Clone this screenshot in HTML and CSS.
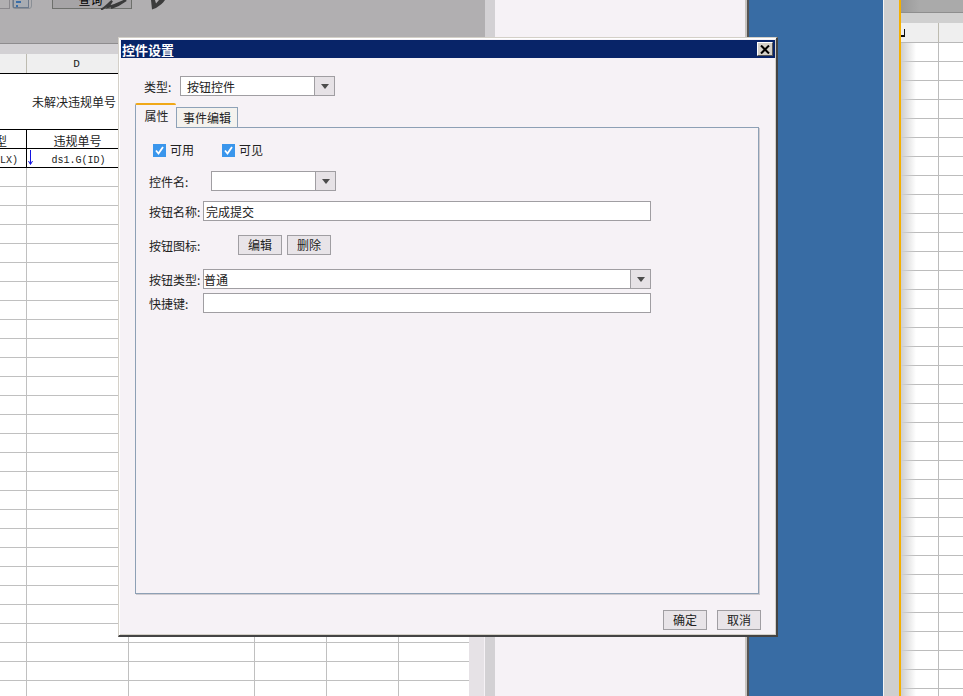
FILE: index.html
```html
<!DOCTYPE html>
<html lang="zh">
<head>
<meta charset="utf-8">
<title>控件设置</title>
<link rel="stylesheet" href="styles.css">
</head>
<body>
<div class="desktop">
  <section class="left-app">
    <div class="toolbar">
      <span class="tool-btn tool-a"></span>
      <span class="tool-btn tool-b">
        <svg class="tool-glyph" width="19" height="9" viewBox="0 0 19 9"><rect x="1.500" y="-1" width="15" height="8.500" fill="#a8acb2" stroke="#6c7a8c"/><rect x="4" y="1" width="5" height="2" fill="#3a6ea8"/><rect x="4" y="5" width="2" height="2" fill="#3a6ea8"/></svg>
      </span>
      <span class="tool-btn tool-query">查询
        <svg class="swirl" width="27" height="10" viewBox="0 0 27 10"><path d="M1 9.500C5 8 8 4 12 1L8 7C12 6 18 4 26 0C22 3 17 6 11 8" fill="none" stroke="#3a3a3a" stroke-width="2.200"/></svg>
      </span>
      <svg class="pen" width="16" height="10" viewBox="0 0 16 10"><path d="M1 0L2 9.500L6 8C10 5.500 13 3 15 0L9 0L6 3.500L5 0Z" fill="#3c3c3c"/></svg>
    </div>
    <div class="subbar"></div>
    <div class="sheet-area">
      <div class="sheet">
        <div class="row head-row"><span class="cell"></span><span class="cell">D</span><span class="cell"></span><span class="cell"></span><span class="cell"></span><span class="cell"></span></div>
        <div class="title-row">未解决违规单号</div>
        <div class="row data-row"><span class="cell clip-left">类型</span><span class="cell">违规单号</span><span class="cell"></span><span class="cell"></span><span class="cell"></span><span class="cell"></span></div>
        <div class="row data-row mono-row"><span class="cell clip-right">LX)</span><span class="cell with-arrow"><svg class="down-arrow" width="5" height="15" viewBox="0 0 5 15"><path d="M2.500 0V14M0.500 11L2.500 14.500L4.500 11" fill="none" stroke="#1414e0"/></svg>ds1.G(ID)</span><span class="cell"></span><span class="cell"></span><span class="cell"></span><span class="cell"></span></div>
        <div class="blank-grid"></div>
      </div>
      <div class="vscroll"></div>
    </div>
  </section>
  <div class="strip"></div>
  <section class="page"></section>
  <section class="blue"></section>
  <div class="side-rail"></div>
  <section class="right-app">
    <div class="right-top"></div>
    <div class="right-sub"></div>
    <div class="right-head"><span class="corner-mark"></span></div>
    <div class="right-grid"></div>
  </section>

  <div class="dialog">
    <header class="titlebar">
      <span class="title-text">控件设置</span>
      <button class="close-btn" aria-label="关闭"><svg width="10" height="9" viewBox="0 0 10 9"><path d="M1 0.500L9 8.500M9 0.500L1 8.500" stroke="#000" stroke-width="2"/></svg></button>
    </header>
    <div class="dialog-body">
      <div class="type-row">
        <span class="type-label">类型:</span>
        <div class="combo combo-type"><span class="combo-value">按钮控件</span><span class="combo-arrow"><i class="tri"></i></span></div>
      </div>
      <div class="tabs">
        <span class="tab tab-active">属性</span>
        <span class="tab">事件编辑</span>
      </div>
      <div class="panel">
        <div class="checks">
          <label class="check"><span class="box"><svg width="13" height="13" viewBox="0 0 13 13"><path d="M3 6.500L5.500 9.500L10 3" fill="none" stroke="#fff" stroke-width="1.800"/></svg></span>可用</label>
          <label class="check"><span class="box"><svg width="13" height="13" viewBox="0 0 13 13"><path d="M3 6.500L5.500 9.500L10 3" fill="none" stroke="#fff" stroke-width="1.800"/></svg></span>可见</label>
        </div>
        <div class="field field-name">
          <span class="label label-name">控件名:</span>
          <div class="combo combo-name"><span class="combo-value"></span><span class="combo-arrow"><i class="tri"></i></span></div>
        </div>
        <div class="field field-btn-name">
          <span class="label">按钮名称:</span>
          <div class="input"><span class="input-text">完成提交</span></div>
        </div>
        <div class="field field-icon">
          <span class="label label-icon">按钮图标:</span>
          <button class="btn">编辑</button>
          <button class="btn">删除</button>
        </div>
        <div class="field field-kind">
          <span class="label">按钮类型:</span>
          <div class="combo combo-kind"><span class="combo-value kind-value">普通</span><span class="combo-arrow"><i class="tri"></i></span></div>
        </div>
        <div class="field field-key">
          <span class="label">快捷键:</span>
          <div class="input"></div>
        </div>
      </div>
      <div class="actions">
        <button class="btn">确定</button>
        <button class="btn">取消</button>
      </div>
    </div>
  </div>
</div>
</body>
</html>
```

FILE: styles.css
```css
* { box-sizing: border-box; }
html, body { margin: 0; padding: 0; background: #f6f2f6; }
body { font-family: "Noto Sans CJK SC", "Liberation Sans", sans-serif; font-size: 12px; color: #222; }

.desktop { position: relative; display: flex; width: 963px; height: 696px; overflow: hidden; }

/* left application */
.left-app { width: 485px; display: flex; flex-direction: column; flex: none; }
.toolbar { height: 44px; flex: none; background: #b1afb1; border-bottom: 1px solid #8e8c8e; display: flex; align-items: flex-start; overflow: hidden; }
.tool-btn { display: block; height: 20px; margin-top: -11px; border: 1px solid #77767a; flex: none; }
.tool-a { width: 11px; margin-left: -1px; background: #b1afb1; border-color: #8a888c; }
.tool-b { width: 20px; margin-left: 2px; position: relative; background: #b1afb1; border-color: #8a8f96; border-radius: 0 0 3px 3px; }
.tool-glyph { position: absolute; left: -1px; top: 10px; }
.tool-query { position: relative; width: 80px; margin-left: 20px; background: #a6a4a6; border-color: #6e706c; color: #000; text-align: center; line-height: 20px; font-size: 12px; padding-right: 3px; }
.swirl { position: absolute; left: 47px; top: 10px; }
.pen { margin-left: 18px; flex: none; }
.subbar { height: 10px; flex: none; background: #d3d1d4; }
.sheet-area { flex: 1; display: flex; min-height: 0; }
.sheet { width: 469px; flex: none; background: #fff; overflow: hidden; display: flex; flex-direction: column; }
.vscroll { flex: 1; background: #e6e2e6; border-right: 1px solid #f6f2f6; }

.row { display: grid; grid-template-columns: 27px 102px 126px 72px 72px 70px; flex: none; }
.cell { border-right: 1px solid #c0c0c0; text-align: center; white-space: nowrap; overflow: hidden; }
.cell:last-child { border-right: 0; }
.head-row { height: 20px; background: #efefef; border-bottom: 1px solid #000; line-height: 20px; font-family: "Liberation Mono", monospace; font-size: 11px; color: #222; text-indent: -2px; }
.head-row .cell { border-right-color: #bdbbb0; }
.title-row { height: 56px; flex: none; padding: 18px 0 0 32px; border-bottom: 1px solid #000; line-height: 20px; color: #222; }
.data-row { height: 19px; border-bottom: 1px solid #000; line-height: 22px; }
.data-row .cell { border-right-color: #000; }
.clip-left { text-indent: -17px; text-align: left; }
.clip-right { text-align: left; }
.mono-row { font-family: "Liberation Mono", monospace; font-size: 10px; color: #222; line-height: 23px; }
.with-arrow { position: relative; padding-left: 2px; }
.down-arrow { position: absolute; left: 1px; top: 1px; }
.blank-grid {
  flex: 1;
  background-color: #fff;
  background-image:
    linear-gradient(#c0c0c0, #c0c0c0), linear-gradient(#c0c0c0, #c0c0c0), linear-gradient(#c0c0c0, #c0c0c0), linear-gradient(#c0c0c0, #c0c0c0), linear-gradient(#c0c0c0, #c0c0c0),
    repeating-linear-gradient(to bottom, transparent 0 18px, #c0c0c0 18px 19px);
  background-size: 1px 100%, 1px 100%, 1px 100%, 1px 100%, 1px 100%, 100% 100%;
  background-position: 26px 0, 128px 0, 254px 0, 326px 0, 398px 0, 0 0;
  background-repeat: no-repeat;
}

.strip { width: 10px; flex: none; background: #d3d1d4; }
.page { width: 254px; flex: none; background: #f6f2f6; border-right: 2px solid #555; box-shadow: inset -2px 0 0 #c9c5c1; }
.blue { width: 134px; flex: none; background: #386ca4; }
.side-rail { width: 17px; flex: none; background: #cfcfcf; border-left: 1px solid #f4f4f4; border-right: 1px solid #f5b000; }

/* right application */
.right-app { flex: 1; display: flex; flex-direction: column; border-left: 1px solid #f5b000; min-width: 0; }
.right-top { height: 13px; flex: none; background: linear-gradient(to right, #9a9a9a, #aaa 30%); border-bottom: 1px solid #8e8e8e; }
.right-sub { height: 10px; flex: none; background: #d0d0d0; }
.right-head { height: 20px; flex: none; background: linear-gradient(#efefef, #efefef) 0 0/37px 19px no-repeat, linear-gradient(#efefef, #efefef) 38px 0/30px 19px no-repeat, #bdbbb0; border-bottom: 1px solid #b8b8b8; position: relative; }
.corner-mark { position: absolute; left: 0; top: 6px; width: 4px; height: 8px; border-bottom: 2px solid #111; border-right: 1px solid #111; }
.right-grid {
  flex: 1;
  background-color: #fff;
  background-image:
    linear-gradient(to right, #cfcfcf, rgba(255, 255, 255, 0) 15px),
    linear-gradient(#bcbcbc, #bcbcbc),
    repeating-linear-gradient(to bottom, transparent 0 18px, #bcbcbc 18px 19px);
  background-size: 100% 100%, 1px 100%, 100% 100%;
  background-position: 0 0, 37px 0, 0 0;
  background-repeat: no-repeat;
}

/* dialog window */
.dialog { position: absolute; left: 118px; top: 37px; width: 660px; height: 600px; display: flex; flex-direction: column; background: #f6f2f6; border-style: solid; border-color: #d4d0c8; border-width: 1px 2px 2px 1px; border-right-color: #444; border-bottom-color: #444; padding: 2px 1px 2px 2px; box-shadow: inset 1px 1px 0 #fff, inset -1px -1px 0 #d4d0c8; }
.titlebar { height: 18px; flex: none; background: #082468; display: flex; align-items: center; justify-content: space-between; padding: 0 2px 0 1px; }
.title-text { color: #fff; font-weight: 700; font-size: 13px; line-height: 17px; }
.close-btn { width: 16px; height: 14px; padding: 0; display: flex; align-items: center; justify-content: center; background: #d4d0c8; border: 1px solid; border-color: #fff #555 #555 #fff; }
.dialog-body { flex: 1; display: flex; flex-direction: column; padding: 18px 15px 0 14px; min-height: 0; }

.type-row { display: flex; align-items: center; height: 20px; padding-left: 9px; flex: none; }
.type-label { width: 36px; flex: none; }

.combo { display: flex; height: 20px; border: 1px solid #a09ea2; background: #fff; flex: none; }
.combo-value { flex: 1; padding-left: 6px; line-height: 19px; }
.combo-arrow { width: 20px; flex: none; background: #e6e2e6; border-left: 1px solid #a09ea2; display: flex; align-items: center; justify-content: center; }
.tri { display: block; width: 0; height: 0; border-style: solid; border-width: 5px 4.500px 0; border-color: #4c4c4c transparent transparent; }
.combo-type { width: 155px; }
.combo-name { width: 125px; }
.combo-kind { flex: 1; }
.kind-value { padding-left: 0; }

.tabs { display: flex; align-items: flex-end; height: 25px; margin-top: 7px; flex: none; position: relative; z-index: 1; margin-bottom: -1px; }
.tab { display: block; width: 62px; height: 21px; text-align: center; line-height: 20px; background: #f4f2ee; border: 1px solid #8ea2b8; }
.tab-active { width: 41px; height: 25px; line-height: 21px; padding-left: 1px; background: #f6f2f6; border-top: 2px solid #f0a818; border-bottom: 0; border-radius: 2px 2px 0 0; border-right: 0; }

.panel { flex: none; height: 467px; width: 624px; border: 1px solid #8da0b5; box-shadow: 1px 1px 0 #d0ccd0; padding: 15px 0 0 13px; }
.checks { display: flex; height: 14px; padding-left: 4px; }
.check { display: flex; align-items: center; width: 69px; gap: 4px; line-height: 14px; }
.box { display: block; width: 13px; height: 13px; background: #3a96ec; flex: none; }
.box svg { display: block; }

.field { display: flex; align-items: center; width: 502px; }
.label { width: 54px; flex: none; white-space: nowrap; }
.label-name { width: 62px; }
.label-icon { width: 89px; }
.field-name { height: 20px; margin-top: 14px; }
.field-btn-name { height: 20px; margin-top: 10px; }
.field-icon { height: 20px; margin-top: 14px; gap: 5px; }
.field-icon .label { margin-right: -5px; }
.field-kind { height: 20px; margin-top: 14px; }
.field-key { height: 20px; margin-top: 4px; }
.input { flex: 1; height: 20px; border: 1px solid #a09ea2; background: #fff; padding-left: 2px; line-height: 19px; }

.btn { width: 44px; height: 20px; padding: 0; background: #e8e4e8; border: 1px solid #a09ea2; font: inherit; color: #222; line-height: 18px; }
.actions { display: flex; justify-content: flex-end; gap: 10px; padding-top: 16px; width: 626px; flex: none; }
```
